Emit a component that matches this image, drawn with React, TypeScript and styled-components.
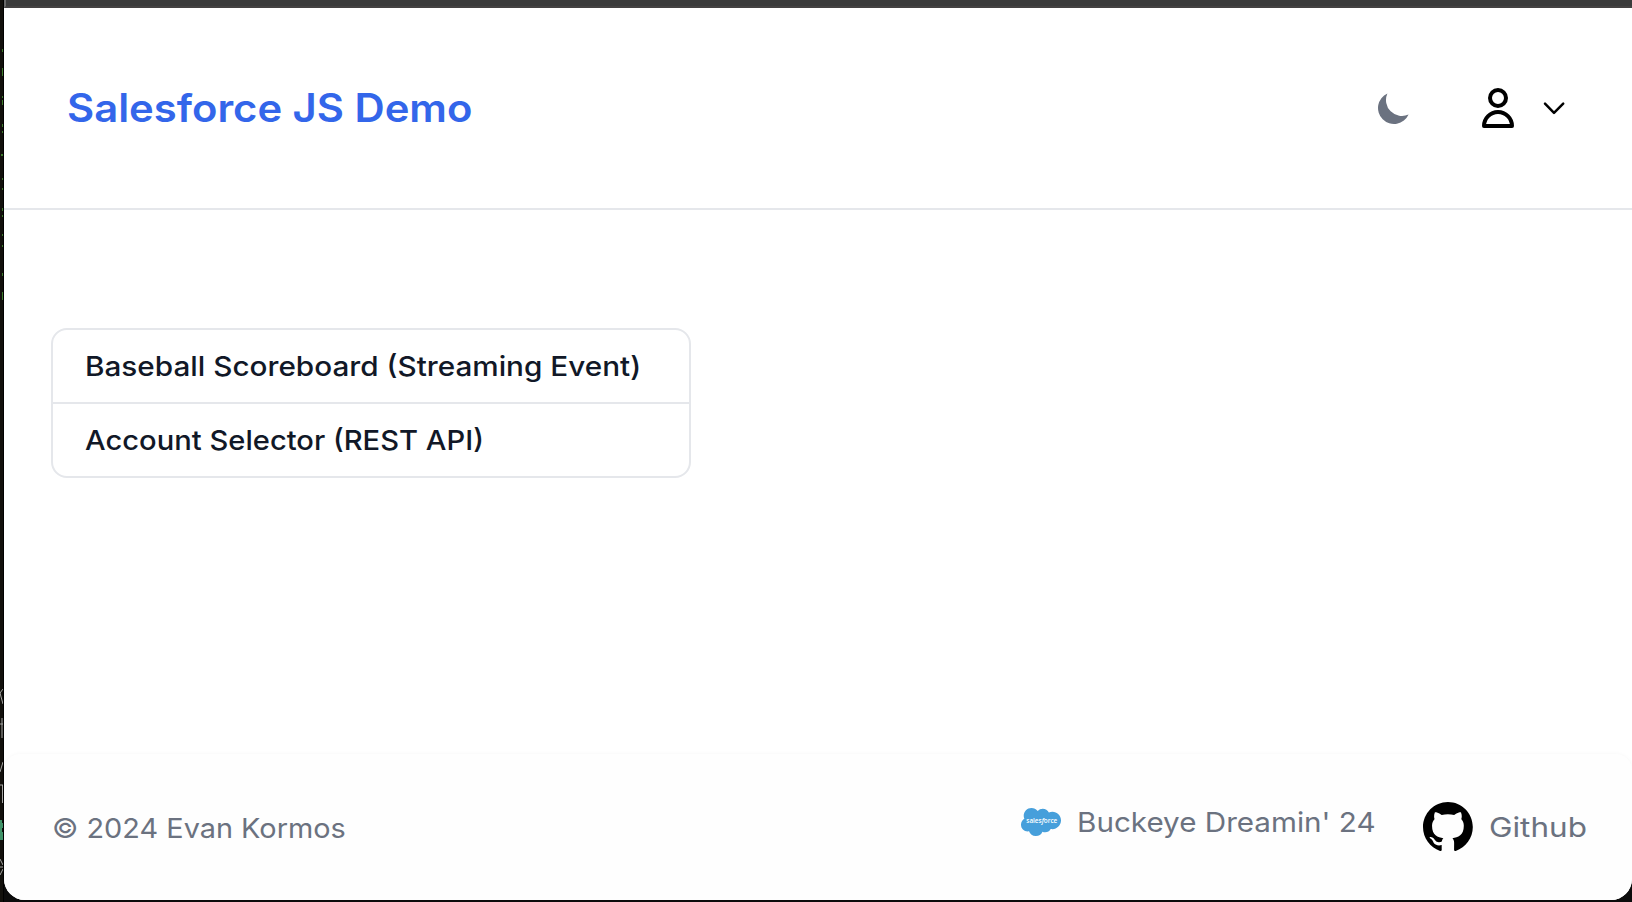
import React from "react";
import styled, { createGlobalStyle } from "styled-components";

const GlobalStyle = createGlobalStyle`
  *, *::before, *::after { box-sizing: border-box; }
  body {
    margin: 0;
    overflow: hidden;
    background: #0c0c0c;
    font-family: Inter, sans-serif;
    -webkit-font-smoothing: antialiased;
  }
  svg { display: block; flex: none; }
`;

const Desktop = styled.div`
  display: flex;
  width: 1632px;
  height: 902px;
  background: #0c0c0c;
`;

const Terminal = styled.aside`
  width: 4px;
  height: 902px;
  flex: none;
  background: #12100c;
`;

const Window = styled.div`
  display: flex;
  flex-direction: column;
  width: 1628px;
  height: 900px;
  overflow: hidden;
  background: #fff;
  border-radius: 0 0 21px 21px;
`;

const TitleBar = styled.div`
  height: 8px;
  flex: none;
  background: #3b3b3b;
  border-left: 2px solid #696969;
  border-bottom: 2px solid #444242;
`;

const Header = styled.header`
  display: flex;
  align-items: center;
  justify-content: space-between;
  height: 202px;
  flex: none;
  padding: 0 67px 0 63px;
  border-bottom: 2px solid #e5e7eb;
`;

const Wide = styled.span<{ $stretch: number }>`
  display: inline-block;
  transform: scaleX(${(p) => p.$stretch});
  transform-origin: left center;
  white-space: nowrap;
`;

const Brand = styled.a`
  color: #3366ea;
  font-size: 39px;
  font-weight: 620;
  line-height: 56px;
`;

const Actions = styled.div`
  display: flex;
  align-items: center;
`;

const ThemeToggle = styled.span`
  color: #6b7280;
  margin-right: 68px;
`;

const UserMenu = styled.span`
  display: flex;
  align-items: center;
  gap: 29px;
  color: #000;
`;

const Main = styled.main`
  flex: 1;
  padding: 118px 47px 0;
`;

const List = styled.ul`
  width: 640px;
  margin: 0;
  padding: 0;
  list-style: none;
  border: 2px solid #e5e7eb;
  border-radius: 16px;
`;

const ListItem = styled.li`
  height: 72px;
  padding: 0 32px;
  color: #111827;
  font-size: 27.5px;
  font-weight: 500;
  line-height: 72px;
  & + & {
    height: 74px;
    border-top: 2px solid #e5e7eb;
  }
`;

const Footer = styled.footer`
  display: flex;
  align-items: flex-start;
  justify-content: space-between;
  height: 146px;
  flex: none;
  padding: 0 47px 0 48px;
  background: #fefefe;
  border-radius: 16px;
  box-shadow: 0 0 4px rgba(0, 0, 0, 0.04);
`;

const FooterText = styled.span`
  color: #6b7280;
  font-size: 27.5px;
  font-weight: 370;
  line-height: 40px;
`;

const Copyright = styled.div`
  padding-top: 54px;
`;

const Links = styled.div`
  display: flex;
  align-items: flex-start;
  gap: 47px;
`;

const FooterLink = styled.a<{ $width: number }>`
  display: flex;
  align-items: center;
  gap: 16px;
  width: ${(p) => p.$width}px;
  padding-top: 48px;
`;

const TerminalOutput = () => (
  <svg width="4" height="902" viewBox="0 0 4 902">
    <g fill="#3d7a2b">
      <path d="M2 49h1v3h-1zM2 68h1v8h-1zM2 96h1v2h-1zM2 100h1v5h-1zM2 124h1v3h-1zM2 131h1v2h-1zM1 154h2v2h-2zM2 178h1v2h-1zM2 188h1v2h-1zM2 208h1v3h-1zM2 215h1v2h-1zM2 234h1v2h-1zM2 245h1v2h-1zM2 273h1v3h-1zM2 292h1v8h-1z" />
    </g>
    <g stroke="#a5a5a3" fill="none">
      <path d="M3 689L0 693L3 704M2 718V738M0 724H3M3 762L0 772M0 785H3M2.5 785V803M0 859L3 865M0 867H3M0 875L3 869" />
    </g>
    <path d="M0 820h2v3h1v5h-1v4h1v8h-3z" fill="#409268" />
    <path d="M3 0h1v902h-1z" fill="#000" />
  </svg>
);

const MoonIcon = () => (
  <svg width="40" height="40" viewBox="0 0 20 20" fill="currentColor">
    <path d="M17.293 13.293A8 8 0 016.707 2.707a8.001 8.001 0 1010.586 10.586z" />
  </svg>
);

const UserIcon = () => (
  <svg width="32" height="40" viewBox="0 0 32 40" fill="none" stroke="currentColor" strokeWidth="4" strokeLinejoin="round">
    <circle cx="16" cy="10" r="8" />
    <path d="M2 38a14 14 0 0 1 28 0z" />
  </svg>
);

const ChevronIcon = () => (
  <svg width="22" height="14" viewBox="0 0 22 14" fill="none" stroke="currentColor" strokeWidth="2.5" strokeLinecap="round" strokeLinejoin="round">
    <path d="M2 2.6l9 9.2 9.2-9.2" />
  </svg>
);

const CloudLogo = () => (
  <svg width="40" height="28" viewBox="0 0 40 28">
    <path
      transform="scale(1.6667) translate(0 -3.6)"
      fill="#469fdb"
      d="M10.006 5.415a4.195 4.195 0 013.045-1.306c1.56 0 2.954.9 3.69 2.205.63-.3 1.35-.45 2.1-.45 2.85 0 5.159 2.34 5.159 5.22s-2.31 5.22-5.176 5.22c-.345 0-.69-.044-1.02-.104a3.75 3.75 0 01-3.3 1.95c-.6 0-1.155-.15-1.65-.375A4.314 4.314 0 018.88 20.4a4.302 4.302 0 01-4.05-2.82c-.27.062-.54.076-.825.076-2.204 0-4.005-1.8-4.005-4.05 0-1.5.811-2.805 2.01-3.51-.255-.57-.39-1.2-.39-1.846 0-2.58 2.1-4.65 4.65-4.65 1.53 0 2.85.705 3.72 1.8z"
    />
    <text x="5.3" y="14.8" fill="#fff" fontFamily="Open Sans, sans-serif" fontSize="6.4" fontWeight="600" textLength="31">
      sales<tspan fontStyle="italic">f</tspan>orce
    </text>
  </svg>
);

const GithubLogo = () => (
  <svg width="50" height="49" viewBox="0 0 98 96" fill="#000">
    <path d="M48.854 0C21.839 0 0 22 0 49.217c0 21.756 13.993 40.172 33.405 46.69 2.427.49 3.316-1.059 3.316-2.362 0-1.141-.08-5.052-.08-9.127-13.59 2.934-16.42-5.867-16.42-5.867-2.184-5.704-5.42-7.17-5.42-7.17-4.448-3.015.324-3.015.324-3.015 4.934.326 7.523 5.052 7.523 5.052 4.367 7.496 11.404 5.378 14.235 4.074.404-3.178 1.699-5.378 3.074-6.6-10.839-1.141-22.243-5.378-22.243-24.283 0-5.378 1.94-9.778 5.014-13.2-.485-1.222-2.184-6.275.486-13.038 0 0 4.125-1.304 13.426 5.052a46.97 46.97 0 0 1 12.214-1.63c4.125 0 8.33.571 12.213 1.63 9.302-6.356 13.427-5.052 13.427-5.052 2.67 6.763.97 11.816.485 13.038 3.155 3.422 5.015 7.822 5.015 13.2 0 18.905-11.404 23.06-22.324 24.283 1.78 1.548 3.316 4.481 3.316 9.126 0 6.6-.08 11.897-.08 13.526 0 1.304.89 2.853 3.316 2.364 19.412-6.52 33.405-24.935 33.405-46.691C97.707 22 75.788 0 48.854 0z" />
  </svg>
);

export default function App() {
  return (
    <>
      <GlobalStyle />
      <Desktop>
        <Terminal>
          <TerminalOutput />
        </Terminal>
        <Window>
          <TitleBar />
          <Header>
            <Brand>
              <Wide $stretch={1.071}>Salesforce JS Demo</Wide>
            </Brand>
            <Actions>
              <ThemeToggle>
                <MoonIcon />
              </ThemeToggle>
              <UserMenu>
                <UserIcon />
                <ChevronIcon />
              </UserMenu>
            </Actions>
          </Header>
          <Main>
            <List>
              <ListItem>
                <Wide $stretch={1.08}>Baseball Scoreboard (Streaming Event)</Wide>
              </ListItem>
              <ListItem>
                <Wide $stretch={1.06}>Account Selector (REST API)</Wide>
              </ListItem>
            </List>
          </Main>
          <Footer>
            <Copyright>
              <FooterText>
                <Wide $stretch={1.05}>© 2024 Evan Kormos</Wide>
              </FooterText>
            </Copyright>
            <Links>
              <FooterLink $width={355}>
                <CloudLogo />
                <FooterText>
                  <Wide $stretch={1.077}>Buckeye Dreamin' 24</Wide>
                </FooterText>
              </FooterLink>
              <FooterLink $width={162}>
                <GithubLogo />
                <FooterText>
                  <Wide $stretch={1.145}>Github</Wide>
                </FooterText>
              </FooterLink>
            </Links>
          </Footer>
        </Window>
      </Desktop>
    </>
  );
}
